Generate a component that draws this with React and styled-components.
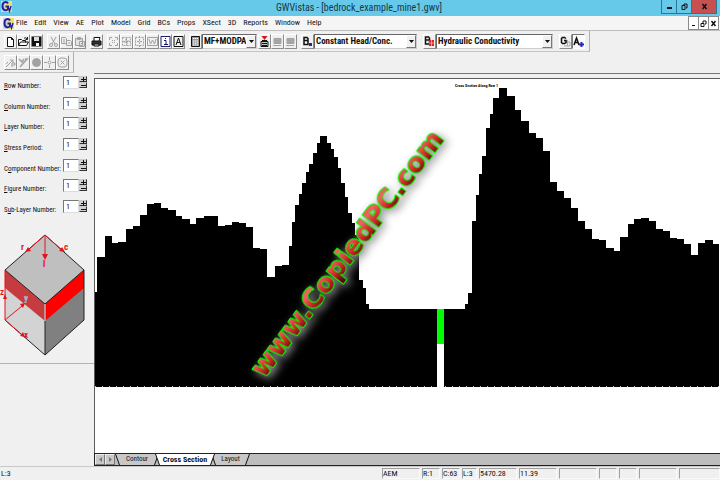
import React from "react";
import styled, { createGlobalStyle, css } from "styled-components";

const GlobalStyle = createGlobalStyle`
  * {
    box-sizing: border-box;
  }
  body {
    margin: 0;
    background: #f0f0f0;
    color: #111;
    font-family: "Roboto Condensed", "Open Sans Condensed", "Noto Sans Condensed", Roboto, sans-serif;
    font-size: 8px;
  }
  button, input, select {
    margin: 0;
    padding: 0;
    border: 0;
    border-radius: 0;
    font: inherit;
    color: inherit;
    background: none;
  }
`;

const menus = [
  "File", "Edit", "View", "AE", "Plot", "Model", "Grid", "BCs",
  "Props", "XSect", "3D", "Reports", "Window", "Help",
];

const spinners = [
  { label: "Row Number:", key: 0 },
  { label: "Column Number:", key: 0 },
  { label: "Layer Number:", key: 0 },
  { label: "Stress Period:", key: 0 },
  { label: "Component Number:", key: 1 },
  { label: "Figure Number:", key: 0 },
  { label: "Sub-Layer Number:", key: 1 },
];

const statusPanels = [
  { text: "AEM", width: 38 },
  { text: "R:1", width: 18 },
  { text: "C:63", width: 18 },
  { text: "L:3", width: 15 },
  { text: "5470.28", width: 38 },
  { text: "11.39", width: 38 },
  { text: "", width: 38 },
  { text: "", width: 18 },
  { text: "", width: 18 },
  { text: "", width: 38 },
  { text: "", width: 41 },
];

// left edge and top of every model cell along the section
const cells = [
  [95, 292], [97, 257], [105, 236], [112, 243], [118, 242], [126, 229],
  [133, 226], [140, 215], [147, 204], [154, 203], [161, 208], [168, 210],
  [176, 216], [182, 219], [190, 224], [196, 218], [204, 216], [218, 226],
  [225, 225], [232, 222], [239, 223], [246, 227], [253, 248], [260, 249],
  [267, 277], [275, 266], [282, 265], [289, 246], [292, 222], [295, 205],
  [299, 194], [302, 183], [306, 172], [309, 164], [313, 153], [317, 143],
  [320, 136], [327, 143], [331, 149], [334, 157], [338, 168], [341, 183],
  [345, 197], [348, 213], [352, 223], [355, 235], [359, 280], [363, 288],
  [366, 304], [369, 309], [465, 304], [468, 293], [472, 221], [476, 195],
  [479, 174], [482, 156], [486, 128], [490, 114], [493, 98], [499, 88],
  [507, 96], [515, 110], [521, 121], [529, 133], [536, 138], [543, 151],
  [550, 182], [557, 191], [564, 198], [571, 208], [578, 221], [585, 229],
  [592, 239], [599, 240], [606, 248], [614, 251], [620, 237], [628, 224],
  [634, 219], [641, 218], [649, 221], [656, 229], [663, 231], [670, 238],
  [677, 239], [684, 244], [691, 255], [698, 243], [705, 240], [713, 244],
];

const sectionPath =
  "M95 387" + cells.map(([x, y]) => `H${x}V${y}`).join("") + "H719V387Z";

const Window = styled.div`
  display: flex;
  flex-direction: column;
  min-height: 100vh;
`;

const TitleBar = styled.header`
  display: flex;
  align-items: flex-start;
  height: 16px;
  flex: none;
  padding: 0 3px 0 1px;
  background: #66c9ea;
  h1 {
    flex: 1;
    margin: 0;
    padding-left: 44px;
    text-align: center;
    font-size: 10px;
    line-height: 16px;
    font-weight: 400;
    color: #173845;
  }
`;

const CaptionButton = styled.button`
  display: grid;
  place-items: center;
  width: ${({ $close }) => ($close ? 26 : 16)}px;
  height: 14px;
  border: 1px solid #2b7894;
  border-top: 0;
  margin-left: -1px;
  background: ${({ $close }) => ($close ? "#c75050" : "#66c9ea")};
`;

const MenuBar = styled.nav`
  display: flex;
  align-items: center;
  height: 15px;
  flex: none;
  padding: 0 1px 0 3px;
  background: #f5f5f5;
  border-bottom: 1px solid #bdbdbd;
`;

const MenuList = styled.div`
  display: flex;
  flex: 1;
  gap: 7px;
  padding-left: 2px;
  line-height: 14px;
`;

const ChildButton = styled.button`
  display: grid;
  place-items: center;
  width: 11px;
  height: 14px;
  margin-left: -1px;
  border: 1px solid #8a8a8a;
  background: #fff;
`;

const Toolbar = styled.div`
  display: flex;
  align-items: center;
  align-self: flex-start;
  height: 21px;
  flex: none;
  padding: 0 4px;
  border-right: 1px solid #b0b0b0;
  border-bottom: 1px solid #c4c4c4;
`;

const ToolGroup = styled.div`
  display: flex;
  margin-right: ${({ $gap = 4 }) => $gap}px;
`;

const ToolButton = styled.button`
  display: grid;
  place-items: center;
  width: 13px;
  height: 15px;
  border: 1px solid;
  border-color: #fff #8c8c8c #8c8c8c #fff;
  color: ${({ disabled }) => (disabled ? "#a2a2a2" : "#111")};
  ${({ $pressed }) =>
    $pressed &&
    css`
      border-color: #777 #fff #fff #777;
      background: #fafafa;
    `}
`;

const Combo = styled.div`
  display: flex;
  width: ${({ $width }) => $width}px;
  height: 15px;
  border: 1px solid;
  border-color: #666 #ccc #ccc #666;
  background: #fff;
  select {
    flex: 1;
    min-width: 0;
    padding-left: 1px;
    appearance: none;
    font-size: 9px;
    font-weight: 700;
    line-height: 13px;
  }
`;

const ComboArrow = styled.span`
  display: grid;
  place-items: center;
  width: 10px;
  border: 1px solid;
  border-color: #fff #777 #777 #fff;
  background: #f0f0f0;
`;

const Body = styled.div`
  display: flex;
  flex: 1;
`;

const Sidebar = styled.aside`
  width: 94px;
  flex: none;
`;

const SidebarContent = styled.div`
  padding-top: 3px;
  border-bottom: 1px solid #b4b4b4;
  svg {
    display: block;
  }
`;

const SpinnerList = styled.div`
  display: flex;
  flex-direction: column;
  justify-content: space-between;
  min-height: 138px;
  padding: 0 7px 0 4px;
`;

const SpinnerRow = styled.div`
  display: flex;
  align-items: flex-start;
  height: 14px;
  label {
    flex: 1;
    min-width: 0;
    padding-top: 5px;
    font-size: 7px;
    line-height: 10px;
    white-space: nowrap;
  }
  input {
    width: 16px;
    height: 13px;
    padding-left: 2px;
    border: 1px solid;
    border-color: #777 #ddd #ddd #777;
    background: #fff;
  }
`;

const SpinButtons = styled.div`
  display: flex;
  flex-direction: column;
  width: 8px;
  button {
    display: grid;
    place-items: center;
    height: 6px;
    border: 1px solid;
    border-color: #ccc #333 #333 #ccc;
    background: #d0d0d0;
  }
`;

const View = styled.main`
  display: flex;
  flex-direction: column;
  flex: 1;
  min-width: 0;
  border-top: 1px solid #777;
  padding-top: 4px;
`;

const Canvas = styled.div`
  flex: 1;
  min-height: 0;
  border: solid #5c5c5c;
  border-width: 1px 0 0 1px;
  background: #fff;
  svg {
    display: block;
    width: 100%;
  }
`;

const TabStrip = styled.div`
  display: flex;
  height: 13px;
  flex: none;
  border: solid #222;
  border-width: 1px 0 1px 1px;
  background: #bdbdbd;
`;

const ScrollButton = styled.button`
  display: grid;
  place-items: center;
  width: 10px;
  border: 1px solid;
  border-color: #eee #777 #777 #eee;
  background: #c8c8c8;
`;

const Tab = styled.button`
  position: relative;
  isolation: isolate;
  z-index: ${({ $active }) => ($active ? 1 : 0)};
  width: ${({ $width }) => $width}px;
  margin-right: -4px;
  clip-path: polygon(0 0, 100% 0, calc(100% - 4px) 100%, 4px 100%);
  background: #111;
  font-size: ${({ $active }) => ($active ? 8 : 7)}px;
  line-height: 11px;
  font-weight: ${({ $active }) => ($active ? 700 : 400)};
  &::before {
    content: "";
    position: absolute;
    inset: 0 1px;
    z-index: -1;
    clip-path: polygon(0 0, 100% 0, calc(100% - 4px) 100%, 4px 100%);
    background: ${({ $active }) => ($active ? "#fff" : "#c8c8c8")};
  }
`;

const StatusBar = styled.footer`
  display: flex;
  align-items: center;
  gap: 2px;
  height: 14px;
  flex: none;
  padding-left: 1px;
  border-top: 1px solid #c8c8c8;
`;

const StatusMessage = styled.span`
  flex: 1;
`;

const StatusPanel = styled.span`
  width: ${({ $width }) => $width}px;
  height: 11px;
  border: 1px solid;
  border-color: #a0a0a0 #fafafa #fafafa #a0a0a0;
  line-height: 10px;
  white-space: nowrap;
`;

const glyphs = {
  new: <path d="M2.5 1.5h4l2 2v7h-6zM6.5 1.5v2h2" fill="#fff" />,
  open: (
    <>
      <path d="M.5 9.500V3.500h3l1 1h3v2M.5 9.500l2-3.500h8l-2 3.500z" fill="#fff" />
      <path d="M6 2.500c1-1 2.500-1 3 .5M9.500 1v2.500H7.500" />
    </>
  ),
  save: (
    <>
      <path d="M1.500 1.500h8v8h-8z" fill="#111" strokeWidth="2" />
      <path d="M3 1h5v4H3z" fill="#ddd" stroke="none" />
      <path d="M5 7h3v3H5z" fill="#fff" stroke="none" />
    </>
  ),
  cut: (
    <>
      <path d="M3 1l4 7M8 1L4 8" />
      <circle cx="3" cy="9" r="1.500" />
      <circle cx="8" cy="9" r="1.500" />
    </>
  ),
  copy: <path d="M.5 1.500h4l1 1v5h-5zM5.500 4.500h4l1 1v4h-5zM2 4h2M2 6h2M7 7h2" fill="#eee" />,
  paste: <path d="M1.500 2.500h7v7h-7zM3.500 1.500h3v2h-3zM5.500 5.500h5v5h-5zM7 7.500h2" fill="#e4e4e4" />,
  print: (
    <>
      <path d="M3 5V1.500h6L8 5" fill="#fff" />
      <path d="M1 5h9v4H1z" fill="#333" />
      <path d="M3 8h5v2H3z" fill="#ddd" />
    </>
  ),
  zoomBox: <path d="M1.500 4V1.500H4M7 1.500h2.500V4M9.500 7v2.500H7M4 9.500H1.500V7M4 4l1 1M7 4L6 5M4 7l1-1M7 7L6 6" />,
  zoomIn: <path d="M1.500 1.500h8v8h-8zM5.500 2v7M2 5.500h7M4 4h3v3H4z" strokeDasharray="2 1" />,
  zoomOut: <path d="M1.500 1.500h8v8h-8zM5.500 0v11M3 5.500h5" strokeDasharray="2 1" />,
  world: <path d="M.5 1.500h10v8H.5zM2 3l1.500 5 2-4 2 4L9 3" />,
  info: (
    <>
      <path d="M1 .5h9v10H1z" stroke="#22226e" fill="#fff" />
      <path d="M4 4.500h2v4M4 8.500h4M5 2.500h1" stroke="#15156a" />
    </>
  ),
  text: <path d="M1 .5h9v10H1zM3 9l2.500-7L8 9M4 6.500h3" />,
  calc: (
    <>
      <path d="M1.500 .5h8v10h-8z" fill="#999" />
      <path d="M3 2.500h5M3 5h5M3 7h5M3 9h5" stroke="#fff" strokeDasharray="1.500 .5" />
    </>
  ),
  bucket: (
    <>
      <path d="M2 5.500h7v5H2zM3 4.500h5M3 7.500h5M3 9.500h5" fill="#ccc" />
      <path d="M2.500 0h6L5.500 4z" fill="#d01919" stroke="none" />
    </>
  ),
  slab: <path d="M2 2.500h7v5H2zM1 9.500h8M3 4.500h5M3 6.500h5" fill="#aaa" />,
  bcBlue: (
    <>
      <path d="M2 1.500h3l1 1v2H2zM2 4.500h3l1 1v3H2z" strokeWidth="1.500" />
      <path d="M7 7h3v3H7z" fill="#2524a8" stroke="none" />
    </>
  ),
  bcRed: (
    <>
      <path d="M1.500 1h3l1 1v2h-4zM1.500 4h4v4h-4z" strokeWidth="1.500" />
      <path d="M5 4h5v6H5z" fill="#e42020" stroke="none" />
      <path d="M7.500 4v6M5 7h5" stroke="#fff" strokeWidth=".5" />
    </>
  ),
  grid: (
    <>
      <path d="M5 6h5v4H4M7.500 4v6" stroke="#aaa" />
      <path d="M6 2.500L4.500 1.500h-2l-1 1v4l1 1h2L6 6.500v-2H4" strokeWidth="1.500" />
    </>
  ),
  annotate: (
    <>
      <path d="M1 9l2.500-7L6 9M2 6.500h3" strokeWidth="1.500" />
      <path d="M8.500 6v5M6 8.500h5" stroke="#2623cc" strokeWidth="2" />
    </>
  ),
  particle: <path d="M1 10l7-7M5 3h3v3M7 10V6h3v2H7M1 7l2-2" />,
  line: <path d="M2 10L9 2M1 2l3 3 2-3M7 2h3" strokeWidth="1.500" />,
  dot: <circle cx="5.500" cy="5.500" r="4" fill="currentColor" />,
  target: (
    <>
      <circle cx="5.500" cy="5.500" r="1.500" />
      <path d="M5.500 0v3M5.500 8v3M0 5.500h3M8 5.500h3" />
    </>
  ),
  well: (
    <>
      <rect x="1" y="1" width="9" height="9" rx="3" />
      <path d="M3.500 3.500l4 4M7.500 3.500l-4 4" />
    </>
  ),
};

function Tool({ icon, label, ...rest }) {
  return (
    <ToolButton aria-label={label} {...rest}>
      <svg width="11" height="11" viewBox="0 0 11 11" fill="none" stroke="currentColor">
        {glyphs[icon]}
      </svg>
    </ToolButton>
  );
}

function Arrow({ direction = "down" }) {
  const paths = { down: "M0 1h5L2.500 4z", left: "M4 0v5L1 2.500z", right: "M1 0v5l3-2.500z" };
  return (
    <svg width="5" height="5" viewBox="0 0 5 5">
      <path d={paths[direction]} fill={direction === "down" ? "#111" : "#777"} />
    </svg>
  );
}

function Logo() {
  return (
    <svg width="11" height="13" viewBox="0 0 11 13">
      <path d="M4 1h7v11H4z" fill="#f1df68" />
      <path d="M0 1h5v11H0z" fill="#c9d3ee" />
      <path d="M7 3.500C6 1.500 1.500 1 1.500 6s4 5 5.500 3V6.500H4.500" fill="none" stroke="#22229a" strokeWidth="2" />
      <path d="M7 7l1.500 4L10 6" fill="none" stroke="#22229a" strokeWidth="1.500" />
    </svg>
  );
}

function ComboBox({ label, value, width }) {
  return (
    <Combo $width={width}>
      <select aria-label={label} defaultValue={value}>
        <option>{value}</option>
      </select>
      <ComboArrow>
        <Arrow />
      </ComboArrow>
    </Combo>
  );
}

function Spinner({ label, accessKey }) {
  const id = label.toLowerCase().replace(/[^a-z]/g, "");
  return (
    <SpinnerRow>
      <label htmlFor={id}>
        {label.slice(0, accessKey)}
        <u>{label[accessKey]}</u>
        {label.slice(accessKey + 1)}
      </label>
      <input id={id} defaultValue="1" />
      <SpinButtons>
        <button aria-label={`Increase ${label}`}>
          <svg width="5" height="5" viewBox="0 0 5 5">
            <path d="M0 2.500h5M2.500 0v5" stroke="#111" />
          </svg>
        </button>
        <button aria-label={`Decrease ${label}`}>
          <svg width="5" height="5" viewBox="0 0 5 5">
            <path d="M0 2.500h5" stroke="#111" />
          </svg>
        </button>
      </SpinButtons>
    </SpinnerRow>
  );
}

function Cube() {
  return (
    <svg width="94" height="149" viewBox="0 214 94 149" fontSize="9" fontWeight="700">
      <path d="M45 235L84 270 45 304 5 270z" fill="#bfbfbf" />
      <path d="M5 270L45 304V355L5 320z" fill="#d3d3d3" />
      <path d="M84 270L45 304V355L84 320z" fill="#808080" />
      <path d="M5 270L45 304V321L5 288z" fill="#c63b3f" />
      <path d="M84 270L45 304V321L84 288z" fill="#f00" />
      <path d="M5 270L45 235 84 270V320L45 355 5 320M5 270L45 304 84 270M45 304V355" fill="none" stroke="#222" />
      <path d="M45 304V321" stroke="#fff" />
      <path
        d="M45 235L28 250M45 235L62 250M45 235V257M5 320V270M5 320L22 306M5 320L22 335"
        fill="none"
        stroke="#e0141c"
      />
      <g fill="#e0141c">
        <path d="M25 252l3-5 3 4zM65 252l-6-1 3-4zM45 260l-3-6h6zM5 294l-2 5h4zM25 303l-5 1 3 4zM25 337l-2-5-3 4z" />
        <text x="21" y="250">r</text>
        <text x="64" y="250">c</text>
        <text x="43" y="267">l</text>
        <text x="0" y="295">z</text>
        <text x="24" y="338">x</text>
      </g>
      <text x="24" y="301" fill="#dff2f2" stroke="#777" strokeWidth=".3">y</text>
    </svg>
  );
}

const Watermark = styled.text`
  font-family: "DejaVu Sans", sans-serif;
  font-size: 27px;
  font-weight: 700;
  fill: url(#ember);
  stroke: #0f0;
  stroke-width: 2px;
  stroke-linejoin: round;
  paint-order: stroke;
  filter: drop-shadow(0 4px 4px #8c8c8c);
`;

function CrossSection() {
  return (
    <svg viewBox="95 79 625 374">
      <defs>
        <linearGradient id="ember" x1="0" y1="0" x2="0" y2="1">
          <stop offset=".3" stopColor="#f0605a" />
          <stop offset=".6" stopColor="#d02525" />
          <stop offset=".9" stopColor="#5a0808" />
        </linearGradient>
      </defs>
      <path d={sectionPath} shapeRendering="crispEdges" />
      <path d="M95 386.500H719" stroke="#bbb" strokeDasharray="1 6" shapeRendering="crispEdges" />
      <path d="M437 309h7v78h-7z" fill="#fff" />
      <path d="M437 309h7v35h-7z" fill="#0f0" />
      <text x="455" y="87" fontSize="4" fontWeight="700">
        Cross Section Along Row 1
      </text>
      <Watermark transform="translate(264 379) rotate(-53)">www.CopiedPC.com</Watermark>
    </svg>
  );
}

export default function App() {
  return (
    <Window>
      <GlobalStyle />
      <TitleBar>
        <Logo />
        <h1>GWVistas - [bedrock_example_mine1.gwv]</h1>
        <CaptionButton aria-label="Minimize">
          <svg width="7" height="7"><path d="M1 5h5" stroke="#111" strokeWidth="2" /></svg>
        </CaptionButton>
        <CaptionButton aria-label="Restore">
          <svg width="7" height="7"><path d="M1 2.500h3v4H1zM3 2V1h3v4H5" fill="none" stroke="#111" /></svg>
        </CaptionButton>
        <CaptionButton $close aria-label="Close">
          <svg width="7" height="7"><path d="M1.500 1l4 5M5.500 1l-4 5" stroke="#111" strokeWidth="1.500" /></svg>
        </CaptionButton>
      </TitleBar>

      <MenuBar>
        <Logo />
        <MenuList>
          {menus.map((menu) => (
            <button key={menu}>{menu}</button>
          ))}
        </MenuList>
        <ChildButton aria-label="Minimize document">
          <svg width="7" height="7"><path d="M2 5.500h3" stroke="#111" /></svg>
        </ChildButton>
        <ChildButton aria-label="Restore document">
          <svg width="7" height="7"><path d="M1 3.500h3v3H1zM3 3V1h3v3H5" fill="none" stroke="#111" /></svg>
        </ChildButton>
        <ChildButton aria-label="Close document">
          <svg width="7" height="7"><path d="M1.500 1l4 5M5.500 1l-4 5" stroke="#111" strokeWidth="1.500" /></svg>
        </ChildButton>
      </MenuBar>

      <Toolbar>
        <ToolGroup>
          <Tool icon="new" label="New" />
          <Tool icon="open" label="Open" />
          <Tool icon="save" label="Save" />
        </ToolGroup>
        <ToolGroup>
          <Tool icon="cut" label="Cut" disabled />
          <Tool icon="copy" label="Copy" disabled />
          <Tool icon="paste" label="Paste" disabled />
        </ToolGroup>
        <ToolGroup>
          <Tool icon="print" label="Print" />
        </ToolGroup>
        <ToolGroup>
          <Tool icon="zoomBox" label="Zoom" disabled />
          <Tool icon="zoomIn" label="Zoom in" disabled />
          <Tool icon="zoomOut" label="Zoom out" disabled />
          <Tool icon="world" label="World" disabled />
          <Tool icon="info" label="Info" />
          <Tool icon="text" label="Text" />
        </ToolGroup>
        <ToolGroup $gap={1}>
          <Tool icon="calc" label="Calculate" />
          <ComboBox label="Model" value="MF+MODPA" width={55} />
        </ToolGroup>
        <ToolGroup>
          <Tool icon="bucket" label="Run model" />
          <Tool icon="slab" label="Layer down" disabled />
          <Tool icon="slab" label="Layer up" disabled />
        </ToolGroup>
        <ToolGroup $gap={6}>
          <Tool icon="bcBlue" label="Boundary conditions" />
          <ComboBox label="Boundary condition" value="Constant Head/Conc." width={103} />
        </ToolGroup>
        <ToolGroup $gap={6}>
          <Tool icon="bcRed" label="Properties" />
          <ComboBox label="Property" value="Hydraulic Conductivity" width={117} />
        </ToolGroup>
        <ToolGroup $gap={0}>
          <Tool icon="grid" label="Grid" />
          <Tool icon="annotate" label="Annotate" $pressed />
        </ToolGroup>
      </Toolbar>

      <Toolbar>
        <Tool icon="particle" label="Particle" disabled />
        <Tool icon="line" label="Line" disabled />
        <Tool icon="dot" label="Point" disabled />
        <Tool icon="target" label="Target" disabled />
        <Tool icon="well" label="Well" disabled />
      </Toolbar>

      <Body>
        <Sidebar>
          <SidebarContent>
            <SpinnerList>
              {spinners.map(({ label, key }) => (
                <Spinner key={label} label={label} accessKey={key} />
              ))}
            </SpinnerList>
            <Cube />
          </SidebarContent>
        </Sidebar>
        <View>
          <Canvas>
            <CrossSection />
          </Canvas>
          <TabStrip>
            <ScrollButton aria-label="Previous tab"><Arrow direction="left" /></ScrollButton>
            <ScrollButton aria-label="Next tab"><Arrow direction="right" /></ScrollButton>
            <Tab $width={44}>Contour</Tab>
            <Tab $width={60} $active>Cross Section</Tab>
            <Tab $width={39}>Layout</Tab>
          </TabStrip>
        </View>
      </Body>

      <StatusBar>
        <StatusMessage>L:3</StatusMessage>
        {statusPanels.map(({ text, width }, i) => (
          <StatusPanel key={i} $width={width}>
            {text}
          </StatusPanel>
        ))}
      </StatusBar>
    </Window>
  );
}
